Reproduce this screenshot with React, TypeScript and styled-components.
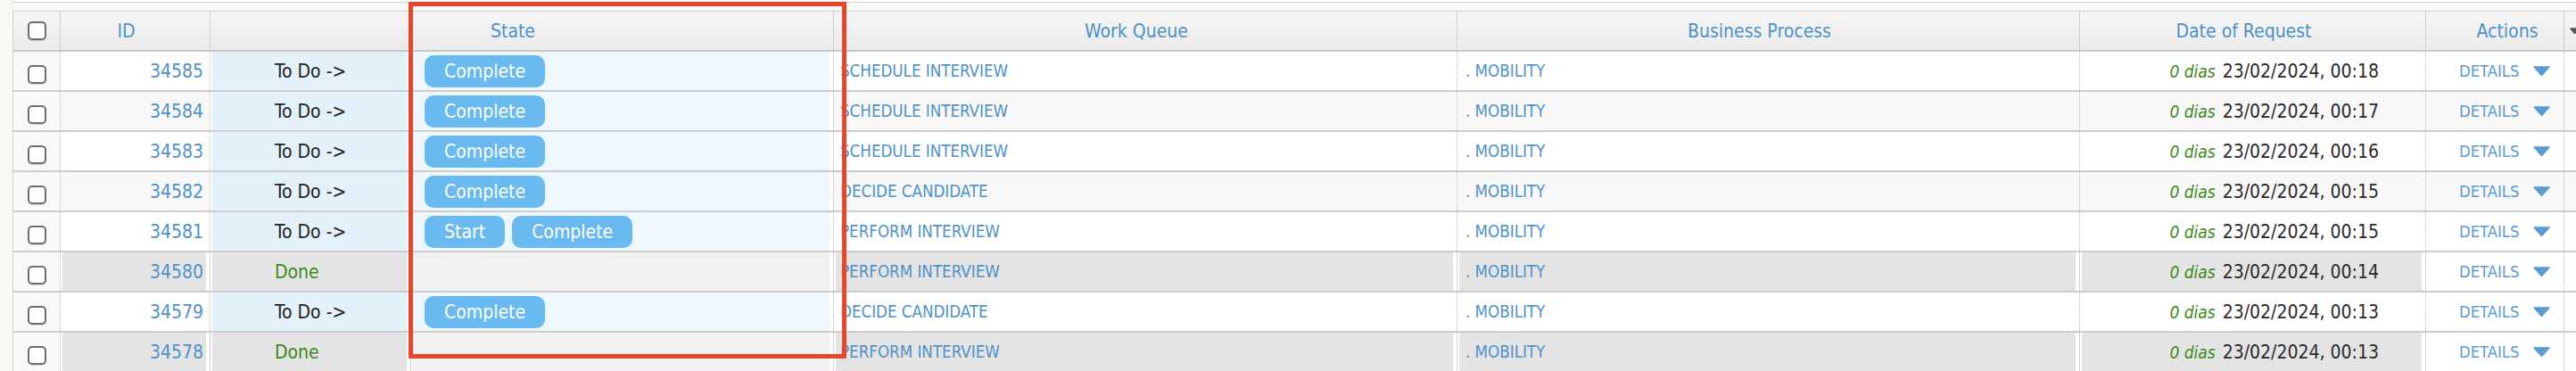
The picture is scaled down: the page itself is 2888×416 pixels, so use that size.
import React from "react";
import styled, { createGlobalStyle } from "styled-components";

const FONT = `"DejaVu Sans Condensed", "DejaVu Sans", sans-serif`;
const COLS = "53px 168px 225px 474px 699px 698px 388px 155px 80px";
const BLUE = "#4d92c9";

const GlobalStyle = createGlobalStyle`
  html, body { margin: 0; padding: 0; }
  body {
    background: #f8f8f4;
    font-family: ${FONT};
    font-stretch: condensed;
    overflow: hidden;
  }
`;

const Page = styled.div`
  position: relative;
  width: 2888px;
  height: 416px;
  overflow: hidden;
  background: #f8f8f4;
`;

const TopStrip = styled.div`
  margin-left: 14px;
  height: 2px;
  background: #ffffff;
  border-left: 1px solid #d6d6dc;
  border-bottom: 1px solid #d6d6de;
`;

const Table = styled.div`
  margin: 9px 0 0 14px;
  width: 2941px;
`;

const HeaderRow = styled.div`
  display: grid;
  grid-template-columns: ${COLS};
  height: 43px;
  background: linear-gradient(#f6f6f6, #ebebeb);
  border-top: 1px solid #d4d4d4;
  border-left: 1px solid #cdcdcd;
  border-bottom: 2px solid #c8c8c8;
`;

const HeaderCell = styled.div<{ $span?: number; $padL?: number; $padR?: number; $align?: string }>`
  grid-column: span ${(p) => p.$span ?? 1};
  display: flex;
  align-items: center;
  justify-content: ${(p) => p.$align ?? "center"};
  padding-left: ${(p) => p.$padL ?? 0}px;
  padding-right: ${(p) => p.$padR ?? 0}px;
  border-right: 1px solid #cfcfcf;
  color: ${BLUE};
  font-size: 21px;
  white-space: nowrap;
  box-sizing: border-box;
`;

const BodyRow = styled.div<{ $bg: string }>`
  display: grid;
  grid-template-columns: ${COLS};
  height: 43px;
  background: ${(p) => p.$bg};
  border-left: 1px solid #d0d0d0;
  border-bottom: 2px solid #cdcdcd;
`;

const Cell = styled.div<{ $bg?: string; $align?: string; $padL?: number; $padR?: number; $inset?: boolean }>`
  display: flex;
  align-items: center;
  justify-content: ${(p) => p.$align ?? "flex-start"};
  padding-left: ${(p) => p.$padL ?? 0}px;
  padding-right: ${(p) => p.$padR ?? 0}px;
  background: ${(p) => p.$bg ?? "transparent"};
  box-shadow: ${(p) => (p.$inset ? "inset 2px 0 0 #ffffff, inset -4px 0 0 #ffffff" : "none")};
  border-right: 1px dotted #bcbcbc;
  box-sizing: border-box;
  white-space: nowrap;
  overflow: hidden;
  font-size: 21px;
`;

const Check = styled.input.attrs({ type: "checkbox" })<{ $shift?: number }>`
  appearance: none;
  margin: ${(p) => p.$shift ?? 0}px 0 0 0;
  width: 21px;
  height: 21px;
  border: 2px solid #6f6f6f;
  border-radius: 5px;
  background: #ffffff;
  box-sizing: border-box;
  box-shadow: 0 1px 1px rgba(0, 0, 0, 0.15);
`;

const IdText = styled.span`
  color: ${BLUE};
`;

const StatusText = styled.span<{ $done: boolean }>`
  color: ${(p) => (p.$done ? "#3c8a18" : "#222222")};
`;

const ButtonGroup = styled.div`
  display: flex;
  gap: 8px;
`;

const ActionButton = styled.button`
  height: 36px;
  padding: 0 22px;
  border: none;
  border-radius: 10px;
  background: #68baf1;
  color: #ffffff;
  font-family: ${FONT};
  font-stretch: condensed;
  font-size: 21px;
  line-height: 36px;
`;

const LinkText = styled.span`
  color: ${BLUE};
  font-size: 18.6px;
  text-transform: uppercase;
`;

const DaysAgo = styled.span`
  color: #3c8a18;
  font-style: italic;
  font-size: 19px;
  margin-right: 8px;
`;

const DateText = styled.span`
  color: #2a2a2a;
`;

const Details = styled.span`
  display: flex;
  align-items: center;
  gap: 16px;
  color: #5a9bd2;
  font-size: 18.3px;
`;

const RedFrame = styled.div`
  position: absolute;
  left: 458px;
  top: 2px;
  width: 491px;
  height: 400px;
  border: 5px solid #e8462b;
  box-sizing: border-box;
  pointer-events: none;
`;

const Caret = ({ w, h, color }: { w: number; h: number; color: string }) => (
  <svg width={w} height={h} viewBox={`0 0 ${w} ${h}`}>
    <path d={`M1 1 L${w - 1} 1 L${w / 2} ${h - 0.5} Z`} fill={color} stroke={color} strokeLinejoin="round" strokeWidth="1.5" />
  </svg>
);

type Row = {
  id: number;
  done: boolean;
  buttons: string[];
  queue: string;
  time: string;
};

const rows: Row[] = [
  { id: 34585, done: false, buttons: ["Complete"], queue: "Schedule interview", time: "00:18" },
  { id: 34584, done: false, buttons: ["Complete"], queue: "Schedule interview", time: "00:17" },
  { id: 34583, done: false, buttons: ["Complete"], queue: "Schedule interview", time: "00:16" },
  { id: 34582, done: false, buttons: ["Complete"], queue: "Decide candidate", time: "00:15" },
  { id: 34581, done: false, buttons: ["Start", "Complete"], queue: "Perform interview", time: "00:15" },
  { id: 34580, done: true, buttons: [], queue: "Perform interview", time: "00:14" },
  { id: 34579, done: false, buttons: ["Complete"], queue: "Decide candidate", time: "00:13" },
  { id: 34578, done: true, buttons: [], queue: "Perform interview", time: "00:13" },
];

export default function App() {
  return (
    <Page>
      <GlobalStyle />
      <TopStrip />
      <Table>
        <HeaderRow>
          <HeaderCell>
            <Check $shift={0} />
          </HeaderCell>
          <HeaderCell $padR={20}>ID</HeaderCell>
          <HeaderCell $span={2} $padR={20}>State</HeaderCell>
          <HeaderCell $padR={20}>Work Queue</HeaderCell>
          <HeaderCell $padR={20}>Business Process</HeaderCell>
          <HeaderCell $padR={20}>Date of Request</HeaderCell>
          <HeaderCell $padL={28}>Actions</HeaderCell>
          <HeaderCell $align="flex-start" $padL={6}>
            <Caret w={11} h={7} color="#555555" />
          </HeaderCell>
        </HeaderRow>
        {rows.map((r, i) => {
          const even = i % 2 === 1;
          const base = r.done ? "#ffffff" : even ? "#f8f8f8" : "#ffffff";
          const dataBg = r.done ? "#e4e4e4" : base;
          return (
            <BodyRow key={r.id} $bg={base}>
              <Cell $align="center" $bg="#f9f9f9">
                <Check $shift={7} />
              </Cell>
              <Cell $align="flex-end" $padR={7} $bg={dataBg} $inset={r.done}>
                <IdText>{r.id}</IdText>
              </Cell>
              <Cell $padL={72} $bg={r.done ? "#e4e4e4" : "#e2f1fa"} $inset>
                <StatusText $done={r.done}>{r.done ? "Done" : "To Do ->"}</StatusText>
              </Cell>
              <Cell $padL={15} $bg={r.done ? "#f1f1f1" : "#eef7fc"} $inset>
                <ButtonGroup>
                  {r.buttons.map((b) => (
                    <ActionButton key={b}>{b}</ActionButton>
                  ))}
                </ButtonGroup>
              </Cell>
              <Cell $padL={7} $bg={dataBg} $inset={r.done}>
                <LinkText>{r.queue}</LinkText>
              </Cell>
              <Cell $padL={9} $bg={dataBg} $inset={r.done}>
                <LinkText>. Mobility</LinkText>
              </Cell>
              <Cell $align="flex-end" $padR={52} $bg={dataBg} $inset={r.done}>
                <DaysAgo>0 dias</DaysAgo>
                <DateText>23/02/2024, {r.time}</DateText>
              </Cell>
              <Cell $padL={37}>
                <Details>
                  DETAILS
                  <Caret w={19} h={11} color="#5a9bd2" />
                </Details>
              </Cell>
              <Cell />
            </BodyRow>
          );
        })}
      </Table>
      <RedFrame />
    </Page>
  );
}
